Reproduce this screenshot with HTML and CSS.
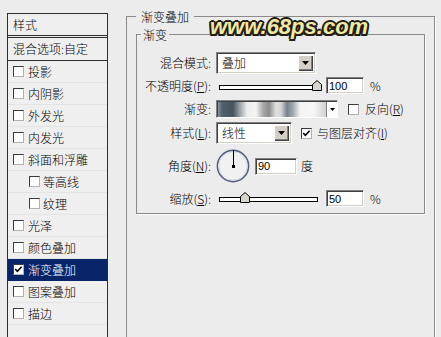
FILE: index.html
```html
<!DOCTYPE html>
<html lang="zh-CN">
<head>
<meta charset="utf-8">
<title>图层样式 - 渐变叠加</title>
<link rel="stylesheet" href="styles.css">
</head>
<body>
<div class="dialog">
  <aside class="style-list">
    <div class="list-head">样式</div>
    <div class="list-blend">混合选项:自定</div>
    <ul class="fx-list">
      <li><span class="cb"></span>投影</li>
      <li><span class="cb"></span>内阴影</li>
      <li><span class="cb"></span>外发光</li>
      <li><span class="cb"></span>内发光</li>
      <li><span class="cb"></span>斜面和浮雕</li>
      <li class="sub"><span class="cb"></span>等高线</li>
      <li class="sub"><span class="cb"></span>纹理</li>
      <li><span class="cb"></span>光泽</li>
      <li><span class="cb"></span>颜色叠加</li>
      <li class="active"><span class="cb"><svg class="tick" width="9" height="9" viewBox="0 0 9 9"><polyline points="1.2,4 3.4,6.4 7.6,1.8" fill="none" stroke="#000" stroke-width="1.6"/></svg></span>渐变叠加</li>
      <li><span class="cb"></span>图案叠加</li>
      <li><span class="cb"></span>描边</li>
    </ul>
  </aside>

  <main class="panel">
    <fieldset class="group group-outer">
      <legend>渐变叠加</legend>
      <fieldset class="group group-inner">
        <legend>渐变</legend>
        <div class="form">
          <div class="row r1">
            <span class="lbl">混合模式:</span>
            <div class="select sel-blend"><span class="val">叠加</span><span class="btn"><svg width="7" height="4" viewBox="0 0 7 4"><polygon points="0,0 7,0 3.5,4" fill="#000"/></svg></span></div>
          </div>
          <div class="row r2">
            <span class="lbl">不透明度(<u>P</u>):</span>
            <div class="slider s-opacity"><svg class="thumb" width="10" height="11" viewBox="0 0 10 11"><polygon points="0.5,10.5 0.5,4.5 5,0.5 9.5,4.5 9.5,10.5" fill="#d8d5cf" stroke="#000" stroke-width="1"/></svg></div>
            <input class="num" type="text" value="100" readonly>
            <span class="unit">%</span>
          </div>
          <div class="row r3">
            <span class="lbl">渐变:</span>
            <div class="grad"><span class="swatch"></span><span class="grad-drop"><svg width="5" height="3" viewBox="0 0 5 3"><polygon points="0,0 5,0 2.5,3" fill="#000"/></svg></span></div>
            <span class="cb cb-ctl"></span>
            <span class="cb-text">反向(<u>R</u>)</span>
          </div>
          <div class="row r4">
            <span class="lbl">样式(<u>L</u>):</span>
            <div class="select sel-style"><span class="val">线性</span><span class="btn"><svg width="7" height="4" viewBox="0 0 7 4"><polygon points="0,0 7,0 3.5,4" fill="#000"/></svg></span></div>
            <span class="cb cb-ctl cb-align"><svg class="tick" width="9" height="9" viewBox="0 0 9 9"><polyline points="1.2,4 3.4,6.4 7.6,1.8" fill="none" stroke="#000" stroke-width="1.6"/></svg></span>
            <span class="cb-text cb-text-align">与图层对齐(<u>I</u>)</span>
          </div>
          <div class="row r5">
            <span class="lbl">角度(<u>N</u>):</span>
            <svg class="dial" width="34" height="34" viewBox="0 0 34 34">
              <circle cx="17" cy="17" r="15.6" fill="#f1f1f1" stroke="#55617e" stroke-width="1.6"/>
              <circle cx="17" cy="17" r="14.2" fill="none" stroke="#d6dae4" stroke-width="1"/>
              <line x1="17.5" y1="17" x2="17.5" y2="1" stroke="#000" stroke-width="1"/>
              <rect x="16" y="16" width="3" height="3" fill="#000"/>
            </svg>
            <input class="num num-angle" type="text" value="90" readonly>
            <span class="unit unit-deg">度</span>
          </div>
          <div class="row r6">
            <span class="lbl">缩放(<u>S</u>):</span>
            <div class="slider s-scale"><svg class="thumb" width="10" height="11" viewBox="0 0 10 11"><polygon points="0.5,10.5 0.5,4.5 5,0.5 9.5,4.5 9.5,10.5" fill="#d8d5cf" stroke="#000" stroke-width="1"/></svg></div>
            <input class="num" type="text" value="50" readonly>
            <span class="unit">%</span>
          </div>
        </div>
      </fieldset>
    </fieldset>
    <div class="watermark">www.68ps.com</div>
  </main>
</div>
</body>
</html>
```

FILE: styles.css
```css
html, body {
  margin: 0;
  padding: 0;
  overflow: hidden;
}

body {
  width: 441px;
  height: 337px;
  background: #ececec;
  color: #000;
  font: 300 12px/14px "Noto Sans CJK SC", "Noto Sans", sans-serif;
}

.dialog {
  display: flex;
  align-items: flex-start;
  padding-left: 7px;
}

/* ---------- left style list ---------- */
.style-list {
  width: 101px;
  height: 324px;
  margin-top: 13px;
  box-sizing: border-box;
  border: 1px solid #2e2e2e;
  border-bottom: 0;
  background: #efefef;
  flex: none;
}

.list-head {
  height: 21px;
  line-height: 21px;
  padding-left: 5px;
  border-bottom: 3px double #2e2e2e;
}

.list-blend {
  height: 22px;
  line-height: 22px;
  padding-left: 5px;
  border-bottom: 1px solid #2e2e2e;
}

.fx-list {
  list-style: none;
  margin: 0;
  padding: 0;
}

.fx-list li {
  height: 21px;
  border-bottom: 1px solid #e4e4e4;
  display: flex;
  align-items: center;
  gap: 4px;
  padding-left: 5px;
  white-space: nowrap;
}

.fx-list li.sub {
  padding-left: 21px;
  gap: 3px;
}

.fx-list li.active {
  background: #0a246a;
  color: #fff;
  border-bottom-color: #0a246a;
}

.cb {
  width: 11px;
  height: 11px;
  box-sizing: border-box;
  border: 1px solid;
  border-color: #3a3a3a #b0b0b0 #b0b0b0 #3a3a3a;
  background: #fff;
  display: inline-flex;
  align-items: center;
  justify-content: center;
  flex: none;
}

.tick {
  display: block;
}

/* ---------- right panel ---------- */
.panel {
  position: relative;
  margin-left: 18px;
  margin-top: 9px;
}

.group {
  margin: 0;
  border: 1px solid #8a8a8a;
  box-shadow: 1px 1px 0 #fff;
  min-width: 0;
}

.group > legend {
  height: 15px;
  line-height: 15px;
  padding: 0;
}

.group-outer {
  width: 309px;
  height: 328px;
  box-sizing: border-box;
  border-bottom: 0;
  padding: 3px 0 0 9px;
}

.group-outer > legend {
  padding: 0 5px;
}

.group-inner {
  width: 289px;
  box-sizing: border-box;
  padding: 0 0 3px 0;
}

.group-inner > legend {
  margin-left: 4px;
  padding: 0 2px;
}

.form {
  padding-top: 10px;
}

.row {
  display: flex;
  align-items: center;
  white-space: nowrap;
}

.r1 { height: 22px; }
.r2 { height: 23px; }
.r3 { height: 24px; }
.r4 { height: 24px; }
.r5 { height: 42px; }
.r6 { height: 23px; }

.lbl {
  width: 74px;
  flex: none;
  text-align: right;
  margin-right: 5px;
}

u {
  text-underline-offset: 1px;
}

/* combobox */
.select {
  display: flex;
  height: 22px;
  box-sizing: border-box;
  border: 1px solid;
  border-color: #808080 #ffffff #ffffff #808080;
  box-shadow: inset 1px 1px 0 #404040, inset -1px -1px 0 #d4d0c8;
  background: #fff;
  padding: 2px;
  flex: none;
}

.sel-blend { width: 100px; }
.sel-style { width: 76px; }

.select .val {
  flex: 1;
  padding-left: 3px;
  line-height: 16px;
}

.select .btn {
  width: 15px;
  background: #d4d0c8;
  box-shadow: inset 1px 1px 0 #fff, inset -1px -1px 0 #404040, inset -2px -2px 0 #808080;
  display: flex;
  align-items: center;
  justify-content: center;
}

.select .btn svg {
  display: block;
}

/* slider */
.slider {
  position: relative;
  margin-left: 3px;
  height: 5px;
  box-sizing: border-box;
  border: 1px solid #000;
  background: #fff;
  flex: none;
}

.s-opacity {
  width: 98px;
  margin-top: 3px;
}

.s-scale {
  width: 99px;
  margin-top: 2px;
}

.thumb {
  position: absolute;
  top: -6px;
  display: block;
}

.s-opacity .thumb { left: 92px; }
.s-scale .thumb { left: 20px; }

/* numeric fields */
.num {
  -webkit-appearance: none;
  appearance: none;
  margin: 0;
  width: 38px;
  height: 17px;
  box-sizing: border-box;
  background: #fff;
  border: 1px solid;
  border-color: #808080 #ffffff #ffffff #808080;
  box-shadow: inset 1px 1px 0 #404040, inset -1px -1px 0 #d4d0c8;
  padding: 0 0 0 2px;
  font: 11px/15px "Liberation Sans", Arial, sans-serif;
  color: #000;
  outline: none;
  flex: none;
}

.r2 .num { margin-left: 9px; }
.r6 .num { margin-left: 8px; }

.num-angle {
  width: 42px;
  margin-left: 5px;
}

.unit {
  margin-left: 6px;
}

.unit-deg {
  margin-left: 4px;
}

/* gradient preview */
.grad {
  width: 122px;
  height: 18px;
  display: flex;
  box-sizing: border-box;
  border: 1px solid;
  border-color: #808080 #ffffff #ffffff #808080;
  box-shadow: inset 1px 1px 0 #404040;
  padding: 1px 0 0 1px;
  background: #fff;
  flex: none;
}

.swatch {
  flex: 1;
  background: linear-gradient(to right,
    #8a969d 0px,
    #51606b 4px,
    #46545e 15px,
    #9ea5aa 22px,
    #eeeeee 29px,
    #f4f4f4 38px,
    #a8a8a8 45px,
    #8c8c8c 51px,
    #e0e0e0 58px,
    #d6d6d6 63px,
    #77818a 69px,
    #a3a9ad 75px,
    #f3f3f3 82px,
    #f6f6f6 96px,
    #d2d2d2 108px);
}

.grad-drop {
  width: 10px;
  border-left: 1px solid #808080;
  background: #fff;
  display: flex;
  align-items: center;
  justify-content: center;
}

.grad-drop svg {
  display: block;
}

.cb-ctl {
  margin-left: 10px;
}

.cb-align {
  margin-left: 9px;
}

.cb-text {
  margin-left: 6px;
}

.cb-text-align {
  margin-left: 5px;
}

.dial {
  display: block;
  flex: none;
}

/* watermark */
.watermark {
  position: absolute;
  left: 84px;
  top: 7px;
  font: italic bold 22px/22px "Liberation Sans", Arial, sans-serif;
  color: #efe8a8;
  white-space: nowrap;
  text-shadow:
    -2px 0 #221d12, 2px 0 #221d12, 0 -2px #221d12, 0 2px #221d12,
    -1.5px -1.5px #221d12, 1.5px -1.5px #221d12, -1.5px 1.5px #221d12, 1.5px 1.5px #221d12;
}
```
